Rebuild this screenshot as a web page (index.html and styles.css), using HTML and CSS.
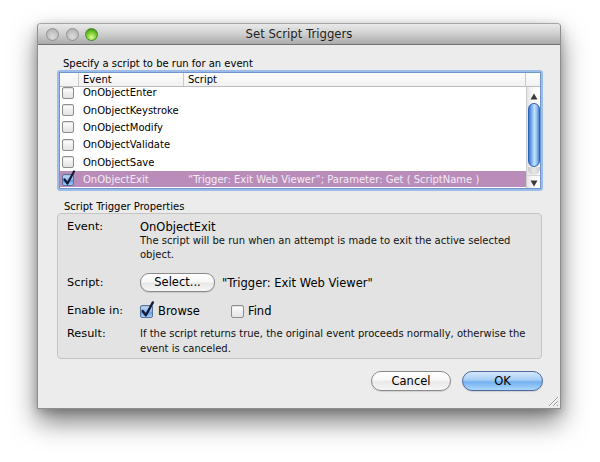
FILE: index.html
```html
<!DOCTYPE html>
<html>
<head>
<meta charset="utf-8">
<link rel="stylesheet" href="styles.css">
</head>
<body>
<div class="window">
  <div class="titlebar">
    <div class="lights"><span class="light"></span><span class="light"></span><span class="light green"></span></div>
    <div class="title">Set Script Triggers</div>
    <div></div>
  </div>
  <div class="content">
    <div class="caption">Specify a script to be run for an event</div>
    <div class="listring">
      <div class="list">
        <div class="lhead">
          <div class="hc c0"></div><div class="hc c1">Event</div><div class="hc c2">Script</div><div class="hc c3"></div>
        </div>
        <div class="lbody">
          <div class="rows-view">
            <div class="rows">
              <div class="row"><div class="c0"><span class="cb"></span></div><div class="c1">OnObjectEnter</div><div class="c2"></div></div>
              <div class="row"><div class="c0"><span class="cb"></span></div><div class="c1">OnObjectKeystroke</div><div class="c2"></div></div>
              <div class="row"><div class="c0"><span class="cb"></span></div><div class="c1">OnObjectModify</div><div class="c2"></div></div>
              <div class="row"><div class="c0"><span class="cb"></span></div><div class="c1">OnObjectValidate</div><div class="c2"></div></div>
              <div class="row"><div class="c0"><span class="cb"></span></div><div class="c1">OnObjectSave</div><div class="c2"></div></div>
              <div class="row sel"><div class="c0"><span class="cb on"><svg viewBox="0 0 14 14" width="14" height="14"><path d="M2.5 6.5 L5.5 10.5 L12 -1.5" fill="none" stroke="#141a3a" stroke-width="2.2" stroke-linejoin="round" stroke-linecap="round"/></svg></span></div><div class="c1">OnObjectExit</div><div class="c2">“Trigger: Exit Web Viewer”; Parameter: Get ( ScriptName )</div></div>
              <div class="row"><div class="c0"><span class="cb"></span></div><div class="c1"></div><div class="c2"></div></div>
            </div>
          </div>
          <div class="vscroll">
            <div class="arrow up"><svg width="8" height="7" viewBox="0 0 8 7"><path d="M4 0.5 L7.5 6.5 L0.5 6.5 Z" fill="#3a3a3a"/></svg></div>
            <div class="thumb"></div>
            <div class="groove-end"></div>
            <div class="arrow down"><svg width="8" height="7" viewBox="0 0 8 7"><path d="M4 6.5 L7.5 0.5 L0.5 0.5 Z" fill="#3a3a3a"/></svg></div>
          </div>
        </div>
      </div>
    </div>
    <div class="grouplabel">Script Trigger Properties</div>
    <div class="group">
      <div class="prow">
        <div class="plabel">Event:</div>
        <div class="pval">
          <div class="evname">OnObjectExit</div>
          <div class="desc">The script will be run when an attempt is made to exit the active selected object.</div>
        </div>
      </div>
      <div class="prow script-row">
        <div class="plabel">Script:</div>
        <div class="pval inline">
          <span class="btn small">Select...</span>
          <span class="script-name">"Trigger: Exit Web Viewer"</span>
        </div>
      </div>
      <div class="prow enable-row">
        <div class="plabel">Enable in:</div>
        <div class="pval inline">
          <span class="cb big on"><svg viewBox="0 0 14 14" width="15" height="15"><path d="M2.5 6.5 L5.5 10.5 L12 -1.5" fill="none" stroke="#141a3a" stroke-width="2.2" stroke-linejoin="round" stroke-linecap="round"/></svg></span>
          <span class="cblabel">Browse</span>
          <span class="cb big find"></span>
          <span class="cblabel findlabel">Find</span>
        </div>
      </div>
      <div class="prow result-row">
        <div class="plabel">Result:</div>
        <div class="pval">
          <div class="desc result">If the script returns true, the original event proceeds normally, otherwise the event is canceled.</div>
        </div>
      </div>
    </div>
    <div class="buttons">
      <span class="btn cancel">Cancel</span>
      <span class="btn ok">OK</span>
    </div>
  </div>
  <svg class="grip" width="12" height="12" viewBox="0 0 12 12">
    <path d="M11 2 L2 11 M11 6 L6 11 M11 10 L10 11" stroke="#9a9a9a" stroke-width="1"/>
    <path d="M11 3 L3 11 M11 7 L7 11" stroke="#fafafa" stroke-width="1"/>
  </svg>
</div>
</body>
</html>
```
FILE: styles.css
```css
html, body {
  margin: 0;
}
body {
  width: 600px;
  height: 462px;
  box-sizing: border-box;
  padding: 23px 0 0 37px;
  background: #ffffff;
  font-family: "DejaVu Sans", "Noto Sans", sans-serif;
  color: #000;
  overflow: hidden;
}
.window {
  position: relative;
  width: 524px;
  height: 386px;
  box-sizing: border-box;
  border: 1px solid #8e8e8e;
  border-top-color: #a5a5a5;
  border-radius: 4px 4px 0 0;
  background: #ececec;
  box-shadow: 0 13px 26px rgba(0, 0, 0, 0.5), 0 3px 10px rgba(0, 0, 0, 0.2);
}
.titlebar {
  height: 21px;
  box-sizing: border-box;
  border-bottom: 1px solid #727272;
  border-radius: 3px 3px 0 0;
  background: linear-gradient(#e9e9e9, #cfcfcf 50%, #aaaaaa);
  display: grid;
  grid-template-columns: 1fr auto 1fr;
  align-items: center;
}
.lights {
  display: flex;
  gap: 6.5px;
  padding-left: 8px;
}
.light {
  width: 13px;
  height: 13px;
  box-sizing: border-box;
  border-radius: 50%;
  border: 1px solid #939393;
  background: radial-gradient(circle at 50% 70%, #dcdcdc 0, #c4c4c4 50%, #a9a9a9 100%);
}
.light.green {
  border-color: #4b8a22;
  background: radial-gradient(circle at 50% 75%, #d6ff9a 0, #8ad63f 40%, #45a016 80%, #3a8412 100%);
}
.title {
  font-size: 11.7px;
  color: #1e1e1e;
  line-height: 20px;
}
.content {
  padding: 12px 17px 17px 19px;
}
.caption {
  font-size: 10px;
  line-height: 13px;
  height: 13px;
  margin-left: 6px;
}
.listring {
  height: 121px;
  box-sizing: border-box;
  padding: 2px;
  border-radius: 3px;
  background: #9cbde9;
}
.list {
  height: 100%;
  box-sizing: border-box;
  border: 1px solid #6f95c9;
  background: #ffffff;
  display: flex;
  flex-direction: column;
}
.lhead {
  display: flex;
  height: 14px;
  flex: none;
  box-sizing: border-box;
  border-bottom: 1px solid #bcbcbc;
  background: linear-gradient(#fdfdfd, #f1f1f1);
  font-size: 10px;
  line-height: 13px;
}
.hc {
  box-sizing: border-box;
  border-right: 1px solid #cacaca;
  padding-left: 4px;
}
.c0 {
  width: 19px;
  flex: none;
}
.c1 {
  width: 105px;
  flex: none;
  box-sizing: border-box;
  padding-left: 4px;
}
.c2 {
  flex: 1;
  box-sizing: border-box;
  padding-left: 4px;
  white-space: nowrap;
}
.hc.c0 { padding-left: 0; }
.c3 {
  width: 14px;
  flex: none;
  border-right: none;
}
.lbody {
  flex: 1;
  display: flex;
  min-height: 0;
}
.rows-view {
  flex: 1;
  overflow: hidden;
}
.rows {
  margin-top: -3px;
}
.row {
  height: 17.4px;
  display: flex;
  align-items: center;
  font-size: 10px;
  line-height: 13px;
}
.row .c0 {
  display: flex;
  align-items: center;
  padding-left: 2px;
  box-sizing: border-box;
}
.row.sel {
  background: linear-gradient(#b98cba, #b98cba 92%, #ffffff 92%);
  color: #f3ecf5;
}
.cb {
  position: relative;
  display: inline-block;
  width: 12px;
  height: 12px;
  box-sizing: border-box;
  border: 1px solid #8d8d8d;
  border-radius: 2px;
  background: linear-gradient(#ffffff, #f0f0f0 50%, #e3e3e3);
  box-shadow: inset 0 1px 1px rgba(0, 0, 0, 0.12);
  flex: none;
}
.cb.on {
  border-color: #56739e;
  background: linear-gradient(#c9def8, #8ab7ee 50%, #5d97e2 51%, #a5cdf7);
}
.cb svg {
  position: absolute;
  left: -1px;
  top: -2px;
  overflow: visible;
}
.cb.big {
  width: 13px;
  height: 13px;
}
.vscroll {
  width: 14px;
  flex: none;
  box-sizing: border-box;
  border-left: 1px solid #cdcdcd;
  background: linear-gradient(to right, #e4e4e4, #f7f7f7 40%, #ffffff);
  display: flex;
  flex-direction: column;
  align-items: center;
}
.arrow {
  display: flex;
  justify-content: center;
  width: 100%;
}
.arrow.up {
  height: 14px;
  align-items: flex-start;
  padding-top: 6px;
  box-sizing: border-box;
}
.arrow.down {
  height: 13px;
  align-items: flex-start;
  padding-top: 4px;
  box-sizing: border-box;
  border-top: 1px solid #d4d4d4;
}
.thumb {
  width: 12px;
  height: 64px;
  margin-top: 2px;
  flex: none;
  box-sizing: border-box;
  border: 1px solid #2f63b8;
  border-radius: 6px;
  background: linear-gradient(to right, #3c76d3, #8fc0f6 35%, #c4e2fc 55%, #90bff3 78%, #4a83d9);
}
.groove-end {
  width: 12px;
  height: 8px;
  flex: none;
  border-radius: 0 0 6px 6px;
  background: linear-gradient(to right, #c8c8c8, #e8e8e8 50%, #cfcfcf);
}
.grouplabel {
  margin-top: 9px;
  margin-left: 7px;
  font-size: 10px;
  line-height: 13px;
  height: 13px;
}
.group {
  height: 146px;
  box-sizing: border-box;
  margin-right: 1px;
  border: 1px solid #c4c4c4;
  border-radius: 4px;
  background: #e3e3e3;
  padding: 6px 8px 0 9px;
}
.prow {
  display: flex;
}
.plabel {
  width: 73px;
  flex: none;
  font-size: 11.3px;
  line-height: 14px;
}
.pval {
  flex: 1;
}
.pval.inline {
  display: flex;
  align-items: center;
}
.evname {
  font-size: 11.5px;
  line-height: 14px;
}
.desc {
  font-size: 10px;
  line-height: 14px;
  color: #111;
}
.desc.result {
  line-height: 14.7px;
}
.script-row {
  margin-top: 11px;
  align-items: center;
}
.enable-row {
  margin-top: 12px;
  align-items: center;
}
.result-row {
  margin-top: 9px;
}
.btn {
  display: inline-block;
  box-sizing: border-box;
  text-align: center;
  border: 1px solid #8a8a8a;
  border-radius: 10px;
  background: linear-gradient(#ffffff, #f7f7f7 45%, #e8e8e8 55%, #f6f6f6);
  box-shadow: 0 1px 1px rgba(0, 0, 0, 0.12);
  font-size: 11.5px;
  color: #000;
}
.btn.small {
  width: 75px;
  height: 19px;
  line-height: 17px;
  border-radius: 9px;
}
.script-name {
  margin-left: 7px;
  font-size: 11.5px;
  line-height: 14px;
}
.cblabel {
  margin-left: 5px;
  font-size: 11.5px;
  line-height: 14px;
}
.cb.find {
  margin-left: 31px;
}
.cblabel.findlabel {
  margin-left: 4px;
}
.buttons {
  margin-top: 12px;
  display: flex;
  justify-content: flex-end;
  gap: 11px;
}
.btn.cancel,
.btn.ok {
  height: 20px;
  line-height: 18px;
}
.btn.cancel {
  width: 80px;
}
.btn.ok {
  width: 81px;
  border-color: #4c6b9c;
  background: linear-gradient(#d6e8fc, #a6cdf6 45%, #74b0f0 55%, #a9d7fd);
}
.grip {
  position: absolute;
  right: 1px;
  bottom: 1px;
}
```
